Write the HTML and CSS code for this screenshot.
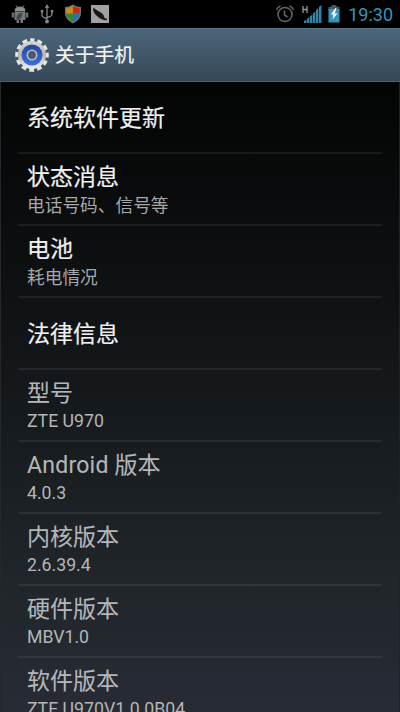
FILE: index.html
```html
<!DOCTYPE html>
<html lang="zh-CN">
<head>
<meta charset="utf-8">
<title>关于手机</title>
<link rel="stylesheet" href="styles.css">
</head>
<body>
<div class="screen">
  <div class="status">
    <div class="notes">
      <svg width="18" height="20" viewBox="0 0 18 20"><path d="M4 7Q4 3 9 3T14 7zM5 1.500l2 2.500M13 1.500l-2 2.500" fill="#8b8f8b" stroke="#8b8f8b"/><path d="M3.500 8h11v8H12v3H9.500v-3H8v3H5.500v-3h-2z" fill="#777b77"/><path d="M.8 8.500h2.200v5H.8zM15 8.500h2.200v5H15z" fill="#6c706c"/><path d="M5.500 14.500c0-4 3-6 6-6 0 4-2 8-6 8z" fill="#454945"/></svg>
      <svg width="14" height="20" viewBox="0 0 14 20" fill="none" stroke="#858585" stroke-width="1.300"><path d="M7 3v14M7 14.500Q2 13.500 2 11V7M7 13.500Q12 12.500 12 10V7"/><path d="M7 0l2.200 4H4.800zM.8 6h2.500v2.500H.8zM10.800 6h2.500v2.500h-2.500z" fill="#858585" stroke="none"/><circle cx="7" cy="17.500" r="2" fill="#858585" stroke="none"/></svg>
      <svg width="18" height="20" viewBox="0 0 18 20"><path d="M9 .5Q13 3 17 3V9Q17 15.500 9 19.500Q1 15.500 1 9V3Q5 3 9 .5Z" fill="#77776f"/><path d="M8.800 2Q5 4.200 2.300 4.200V9.500H8.800z" fill="#c98a20"/><path d="M9.200 2Q13 4.200 15.700 4.200V9.500H9.200z" fill="#b93018"/><path d="M2.300 9.800H8.800V18Q3 15 2.300 9.800z" fill="#36862e"/><path d="M9.200 9.800H15.700Q15 15 9.200 18z" fill="#2672ae"/></svg>
      <svg width="18" height="18" viewBox="0 0 18 18"><path d="M0 0h18v18H0z" fill="#a3a0a3"/><path d="M2.200 2.500Q1.800 7.500 5.500 10.500Q9.500 15 16 15.300V13.800L13.500 13Q13 9 9 7Q5 5 2.200 2.500z" fill="#171717"/></svg>
    </div>
    <div class="system">
      <svg class="alarm" width="20" height="20" viewBox="0 0 20 20" fill="none" stroke="#626262" stroke-width="1.600"><circle cx="10" cy="10.500" r="7"/><path d="M9.500 6.500v4.500l3 2M1.500 6Q2.500 3 5.500 2M18.500 6Q17.500 3 14.500 2"/></svg>
      <svg class="signal" width="20" height="20" viewBox="0 0 20 20"><path d="M1 2v7M5 2v7M1 5.500h4" fill="none" stroke="#999" stroke-width="1.300"/><path d="M2 19v-2l2.400-1.500V19zM5 19v-4l2.400-2V19zM8 19v-6.500l2.400-2V19zM11 19V9.500l2.400-2V19zM14 19V6l2.400-2v15zM17 19V3l2.400-2v18z" fill="#3484a5"/></svg>
      <svg class="battery" width="12" height="20" viewBox="0 0 12 20"><path d="M.5 2.800h3V1h5v1.800h3V6H.5z" fill="#505658"/><path d="M.5 5h11v13.500H.5z" fill="#3295bd"/><path d="M7.500 4L2.800 10.500h2.500L4.500 15.500 9.500 9.500H6.800L8.500 4z" fill="#eefaff"/></svg>
      <span class="clock">19:30</span>
    </div>
  </div>
  <header class="bar">
    <svg class="gear" width="34" height="36" viewBox="-17 -18 34 36">
      <defs>
        <linearGradient id="metal" x1="0" y1="0" x2="0" y2="1"><stop offset="0" stop-color="#d9d9d9"/><stop offset=".5" stop-color="#b8b4b0"/><stop offset="1" stop-color="#f0f0f0"/></linearGradient>
        <linearGradient id="blue" x1="0" y1="0" x2="0" y2="1"><stop offset="0" stop-color="#24479c"/><stop offset="1" stop-color="#376fe6"/></linearGradient>
      </defs>
      <circle r="14.300" fill="none" stroke="#e5e5e5" stroke-width="5" stroke-dasharray="4.600 2.888" stroke-dashoffset="2.300" transform="rotate(-90)"/>
      <circle r="14" fill="url(#metal)"/>
      <circle r="10.500" fill="url(#blue)"/>
      <circle r="4.700" fill="#505868" stroke="#b9bfc8" stroke-width="1.600"/>
    </svg>
    <h1>关于手机</h1>
  </header>
  <main class="list">
    <section class="row"><h2>系统软件更新</h2></section>
    <section class="row"><h2>状态消息</h2><p>电话号码、信号等</p></section>
    <section class="row"><h2>电池</h2><p>耗电情况</p></section>
    <section class="row"><h2>法律信息</h2></section>
    <section class="row info"><h2>型号</h2><p>ZTE U970</p></section>
    <section class="row info"><h2><span class="latin">Android</span> 版本</h2><p>4.0.3</p></section>
    <section class="row info"><h2>内核版本</h2><p>2.6.39.4</p></section>
    <section class="row info"><h2>硬件版本</h2><p>MBV1.0</p></section>
    <section class="row info"><h2>软件版本</h2><p>ZTE U970V1.0.0B04</p></section>
  </main>
</div>
</body>
</html>
```
FILE: styles.css
```css
* { box-sizing: border-box; }
body { margin: 0; background: #000; }
h1, h2, p { margin: 0; font-weight: 400; white-space: nowrap; }
svg { display: block; flex: none; }
.screen {
  width: 400px;
  height: 712px;
  overflow: hidden;
  display: flex;
  flex-direction: column;
  font-family: Roboto, "Noto Sans CJK SC", sans-serif;
}
.status {
  flex: none;
  height: 28px;
  background: #000;
  display: flex;
  justify-content: space-between;
  padding: 0 7px 0 11px;
}
.notes, .system { display: flex; align-items: center; }
.notes { gap: 11px; }
.notes svg:nth-child(2) { margin-right: -1px; }
.notes svg:nth-child(4) { margin-left: -2px; }
.alarm { margin-right: 7px; }
.signal { margin-right: 6px; }
.battery { margin-right: 8px; }
.clock { font-size: 18px; line-height: 28px; color: #3297c0; padding-top: 2px; }
.bar {
  flex: none;
  height: 54px;
  display: flex;
  align-items: center;
  gap: 6px;
  padding-left: 15px;
  background: linear-gradient(#4c667b, #364857);
  border-top: 1px solid #597388;
  border-bottom: 1px solid #4b5f70;
}
.bar h1 { font-size: 19.8px; line-height: 28px; padding-top: 1px; color: #f0f2f4; -webkit-text-stroke: .2px; }
.list {
  flex: 1;
  min-height: 0;
  overflow: hidden;
  padding: 0 17px;
  background: linear-gradient(#030404 0, #0a0c0d 20%, #15191c 50%, #20262a 80%, #282b34 100%);
  border-left: 1px solid #25282b;
  border-right: 1px solid #202326;
}
.row {
  height: 72px;
  display: flex;
  flex-direction: column;
  justify-content: center;
  padding: 3px 0 0 9px;
  border-bottom: 2px solid rgba(255, 255, 255, .07);
}
.row h2 { font-size: 23px; line-height: 32px; color: #f0f0f0; -webkit-text-stroke: .2px; }
.row p { font-size: 17.7px; line-height: 25px; color: #a6a8a9; }
.row.info { padding-top: 2px; }
.row.info h2, .row.info p { color: #b4b6b8; }
.row.info h2 { -webkit-text-stroke: .1px; }
.row.info p { line-height: 24px; margin: -1px 0 1px; }
.latin { letter-spacing: .25px; }
```
